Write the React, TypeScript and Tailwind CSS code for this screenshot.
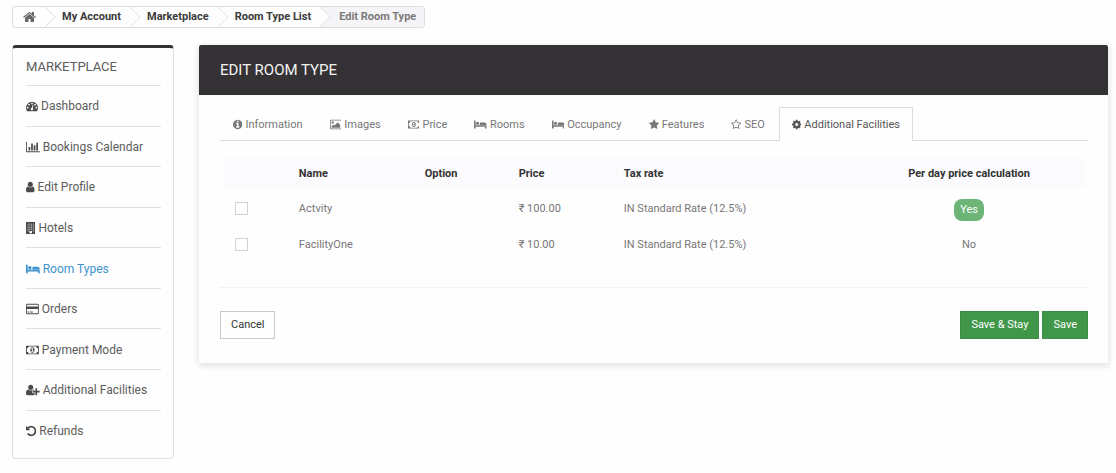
import React from "react";

type Shape = { box: string; d: string };

const shapes: Record<string, Shape> = {
  home: {
    box: "64 0 1664 1792",
    d: "M1472 992v480q0 26-19 45t-45 19h-384v-384h-256v384h-384q-26 0-45-19t-19-45v-480q0-1 .5-3t.5-3l575-474 575 474q1 2 1 6zm223-69l-62 74q-8 9-21 11h-3q-13 0-21-7l-692-577-692 577q-12 8-24 7-13-2-21-11l-62-74q-8-10-7-23.5t11-21.5l719-599q32-26 76-26t76 26l244 204v-195q0-14 9-23t23-9h192q14 0 23 9t9 23v408l219 182q10 8 11 21.5t-7 23.5z",
  },
  dashboard: {
    box: "0 0 1792 1792",
    d: "M896 256a896 896 0 0 1 896 896q0 262-141 483-19 29-54 29H195q-35 0-54-29Q0 1415 0 1152A896 896 0 0 1 896 256zM256 1024a128 128 0 1 0 0 256 128 128 0 1 0 0-256zM448 576a128 128 0 1 0 0 256 128 128 0 1 0 0-256zM896 384a128 128 0 1 0 0 256 128 128 0 1 0 0-256zM1344 576a128 128 0 1 0 0 256 128 128 0 1 0 0-256zM1536 1024a128 128 0 1 0 0 256 128 128 0 1 0 0-256zM1004 1185l101-382q6-26-7.500-48.500t-38.500-29.500-48 6.500-30 39.500l-101 382q-60 5-107 43.500t-63 98.500q-20 77 20 146t117 89 146-20 89-117q16-60-6-117t-72-91z",
  },
  chart: {
    box: "0 0 2048 1792",
    d: "M640 896v512h-256v-512h256zm384-512v1024h-256v-1024h256zm1024 1152v128h-2048v-1536h128v1408h1920zm-640-896v768h-256v-768h256zm384-384v1152h-256v-1152h256z",
  },
  user: {
    box: "256 0 1280 1792",
    d: "M1536 1399q0 109-62.5 187t-150.5 78h-854q-88 0-150.5-78t-62.5-187q0-85 8.5-160.5t31.5-152 58.5-131 94-89 134.5-34.5q131 128 313 128t313-128q76 0 134.5 34.5t94 89 58.5 131 31.5 152 8.5 160.5zm-256-887q0 159-112.5 271.5t-271.5 112.5-271.5-112.5-112.5-271.5 112.5-271.5 271.5-112.5 271.5 112.5 112.5 271.5z",
  },
  building: {
    box: "0 0 1408 1792",
    d: "M64 0h1280q64 0 64 64v1664q0 64-64 64h-1280q-64 0-64-64v-1664q0-64 64-64zM256 256v128h128v-128zM512 256v128h128v-128zM768 256v128h128v-128zM1024 256v128h128v-128zM256 512v128h128v-128zM512 512v128h128v-128zM768 512v128h128v-128zM1024 512v128h128v-128zM256 768v128h128v-128zM512 768v128h128v-128zM768 768v128h128v-128zM1024 768v128h128v-128zM256 1024v128h128v-128zM512 1024v128h128v-128zM768 1024v128h128v-128zM1024 1024v128h128v-128zM256 1280v128h128v-128zM1024 1280v128h128v-128zM512 1344v320h384v-320z",
  },
  bed: {
    box: "0 0 2048 1792",
    d: "M256 1024h1728q26 0 45 19t19 45v448h-256v-256h-1536v256h-256v-1216q0-26 19-45t45-19h128q26 0 45 19t19 45v704zm576-320q0-106-75-181t-181-75-181 75-75 181 75 181 181 75 181-75 75-181zm1216 256v-64q0-132-94-226t-226-94h-704q-26 0-45 19t-19 45v320h1088z",
  },
  card: {
    box: "0 0 1920 1792",
    d: "M1760 128q66 0 113 47t47 113v1216q0 66-47 113t-113 47h-1600q-66 0-113-47t-47-113v-1216q0-66 47-113t113-47h1600zm-1600 128q-13 0-22.5 9.500t-9.500 22.500v224h1664v-224q0-13-9.500-22.500t-22.500-9.500h-1600zm1600 1280q13 0 22.500-9.500t9.500-22.500v-608h-1664v608q0 13 9.500 22.500t22.500 9.500h1600zm-1504-128v-128h256v128h-256zm384 0v-128h384v128h-384z",
  },
  money: {
    box: "0 0 1920 1792",
    d: "M768 1152h384v-96h-128v-448h-114l-148 137 77 80q42-37 55-57h2v288h-128v96zm512-256q0 70-21 142t-59.5 134-101.5 101-138 39-138-39-101.5-101-59.5-134-21-142 21-142 59.5-134 101.5-101 138-39 138 39 101.5 101 59.5 134 21 142zm512 256v-512q-106 0-181-75t-75-181h-1152q0 106-75 181t-181 75v512q106 0 181 75t75 181h1152q0-106 75-181t181-75zm128-832v1152q0 26-19 45t-45 19h-1792q-26 0-45-19t-19-45v-1152q0-26 19-45t45-19h1792q26 0 45 19t19 45z",
  },
  userPlus: {
    box: "0 0 2048 1792",
    d: "M704 896q-159 0-271.5-112.5t-112.5-271.5 112.5-271.5 271.5-112.5 271.5 112.5 112.5 271.5-112.5 271.5-271.5 112.5zm960 128h352q13 0 22.5 9.5t9.5 22.5v192q0 13-9.5 22.5t-22.5 9.5h-352v352q0 13-9.5 22.5t-22.5 9.5h-192q-13 0-22.5-9.5t-9.5-22.5v-352h-352q-13 0-22.5-9.5t-9.5-22.5v-192q0-13 9.5-22.5t22.5-9.5h352v-352q0-13 9.5-22.5t22.5-9.5h192q13 0 22.5 9.5t9.5 22.5v352zm-736 224q0 52 38 90t90 38h256v238q-68 50-171 50h-874q-121 0-194-69t-73-190q0-53 3.5-103.5t14-109 26.5-108.5 43-97.5 62-81 85.5-53.5 111.5-20q19 0 39 17 79 61 154.5 91.5t164.5 30.5 164.5-30.5 154.5-91.5q20-17 39-17 132 0 217 96h-223q-52 0-90 38t-38 90v192z",
  },
  undo: {
    box: "128 0 1536 1792",
    d: "M1664 896q0 156-61 298t-164 245-245 164-298 61q-172 0-327-72.5t-264-204.5q-7-10-6.5-22.5t8.5-20.5l137-138q10-9 25-9 16 2 23 12 73 95 179 147t225 52q104 0 198.5-40.5t163.5-109.5 109.5-163.5 40.5-198.5-40.5-198.5-109.5-163.5-163.5-109.5-198.5-40.5q-98 0-188 35.5t-160 101.5l137 138q31 30 14 69-17 40-59 40h-448q-26 0-45-19t-19-45v-448q0-42 40-59 39-17 69 14l130 129q107-101 244.5-156.5t284.5-55.5q156 0 298 61t245 164 164 245 61 298z",
  },
  info: {
    box: "128 0 1536 1792",
    d: "M1152 1376v-160q0-14-9-23t-23-9h-96v-512q0-14-9-23t-23-9h-320q-14 0-23 9t-9 23v160q0 14 9 23t23 9h96v320h-96q-14 0-23 9t-9 23v160q0 14 9 23t23 9h448q14 0 23-9t9-23zm-128-896v-160q0-14-9-23t-23-9h-192q-14 0-23 9t-9 23v160q0 14 9 23t23 9h192q14 0 23-9t9-23zm640 416q0 209-103 385.5t-279.5 279.5-385.5 103-385.5-103-279.5-279.5-103-385.5 103-385.5 279.5-279.5 385.5-103 385.5 103 279.5 279.5 103 385.5z",
  },
  picture: {
    box: "0 0 1920 1792",
    d: "M640 576q0 80-56 136t-136 56-136-56-56-136 56-136 136-56 136 56 56 136zm1024 384v448h-1408v-192l320-320 160 160 512-512zm96-704h-1600q-13 0-22.5 9.5t-9.5 22.5v1216q0 13 9.5 22.5t22.5 9.5h1600q13 0 22.5-9.5t9.5-22.5v-1216q0-13-9.5-22.5t-22.5-9.5zm160 32v1216q0 66-47 113t-113 47h-1600q-66 0-113-47t-47-113v-1216q0-66 47-113t113-47h1600q66 0 113 47t47 113z",
  },
  star: {
    box: "64 0 1664 1792",
    d: "M1728 647q0 22-26 48l-363 354 86 500q1 7 1 20 0 21-10.5 35.5t-30.5 14.5q-19 0-40-12l-449-236-449 236q-22 12-40 12-21 0-31.5-14.5t-10.5-35.5q0-6 2-20l86-500-364-354q-25-27-25-48 0-37 56-46l502-73 225-455q19-41 49-41t49 41l225 455 502 73q56 9 56 46z",
  },
  starOutline: {
    box: "64 0 1664 1792",
    d: "M1201 1004l306-297-422-62-189-382-189 382-422 62 306 297-73 421 378-199 377 199zm527-357q0 22-26 48l-363 354 86 500q1 7 1 20 0 50-41 50-19 0-40-12l-449-236-449 236q-22 12-40 12-21 0-31.5-14.5t-10.5-35.5q0-6 2-20l86-500-364-354q-25-27-25-48 0-37 56-46l502-73 225-455q19-41 49-41t49 41l225 455 502 73q56 9 56 46z",
  },
  cog: {
    box: "128 0 1536 1792",
    d: "M1152 896q0-106-75-181t-181-75-181 75-75 181 75 181 181 75 181-75 75-181zm512-109v222q0 12-8 23t-20 13l-185 28q-19 54-39 91 35 50 107 138 10 12 10 25t-9 23q-27 37-99 108t-94 71q-12 0-26-9l-138-108q-44 23-91 38-16 136-29 186-7 28-36 28h-222q-14 0-24.5-8.5t-11.5-21.5l-28-184q-49-16-90-37l-141 107q-10 9-25 9-14 0-25-11-126-114-165-168-7-10-7-23 0-12 8-23 15-21 51-66.5t54-70.5q-27-50-41-99l-183-27q-13-2-21-12.5t-8-23.5v-222q0-12 8-23t19-13l186-28q14-46 39-92-40-57-107-138-10-12-10-24 0-10 9-23 26-36 98.5-107.5t94.5-71.5q13 0 26 10l138 107q44-23 91-38 16-136 29-186 7-28 36-28h222q14 0 24.5 8.5t11.5 21.5l28 184q49 16 90 37l142-107q9-9 24-9 13 0 25 10 129 119 165 170 7 8 7 22 0 12-8 23-15 21-51 66.5t-54 70.5q26 50 41 98l183 28q13 2 21 12.5t8 23.5z",
  },
};

function Icon({ name, className }: { name: string; className: string }) {
  const s = shapes[name];
  return (
    <svg viewBox={s.box} className={className} fill="currentColor" fillRule="evenodd" aria-hidden>
      <path d={s.d} />
    </svg>
  );
}

const crumbs = ["My Account", "Marketplace", "Room Type List"];

const menu = [
  { icon: "dashboard", label: "Dashboard" },
  { icon: "chart", label: "Bookings Calendar" },
  { icon: "user", label: "Edit Profile" },
  { icon: "building", label: "Hotels" },
  { icon: "bed", label: "Room Types", active: true },
  { icon: "card", label: "Orders" },
  { icon: "money", label: "Payment Mode" },
  { icon: "userPlus", label: "Additional Facilities" },
  { icon: "undo", label: "Refunds" },
];

const tabs = [
  { icon: "info", label: "Information" },
  { icon: "picture", label: "Images" },
  { icon: "money", label: "Price" },
  { icon: "bed", label: "Rooms" },
  { icon: "bed", label: "Occupancy" },
  { icon: "star", label: "Features" },
  { icon: "starOutline", label: "SEO" },
  { icon: "cog", label: "Additional Facilities", active: true },
];

const facilities = [
  { name: "Actvity", price: "₹ 100.00", tax: "IN Standard Rate (12.5%)", perDay: true },
  { name: "FacilityOne", price: "₹ 10.00", tax: "IN Standard Rate (12.5%)", perDay: false },
];

function Chevron() {
  return (
    <svg viewBox="0 0 11 20" className="h-5 w-[11px] shrink-0" aria-hidden>
      <path d="M0 0L10 10L0 20" fill="#fefefe" stroke="#dedce0" strokeWidth="1" />
    </svg>
  );
}

function Breadcrumbs() {
  return (
    <nav aria-label="Breadcrumb" className="flex">
      <ol className="flex h-[22px] items-stretch overflow-hidden rounded-[3px] border border-[#dedce0] text-[11px] font-bold leading-5 text-[#3a3a3a]">
        <li className="flex">
          <a href="#home" aria-label="Home" className="flex items-center pl-[10px] pr-[9px] text-[#666]">
            <Icon name="home" className="h-[14px] w-[13px]" />
          </a>
          <Chevron />
        </li>
        {crumbs.map((c, i) => (
          <li key={c} className={i === crumbs.length - 1 ? "flex bg-[#f5f4f6]" : "flex"}>
            <a href="#crumb" className="bg-[#fefefe] pl-[6px] pr-[9px]">{c}</a>
            <Chevron />
          </li>
        ))}
        <li aria-current="page" className="bg-[#f5f4f6] px-2 text-[#7a7a7a]">Edit Room Type</li>
      </ol>
    </nav>
  );
}

function Sidebar() {
  return (
    <aside className="flex min-h-[414px] w-[162px] shrink-0 flex-col rounded-[4px] border border-t-[3px] border-[#e2e0e4] border-t-[#353235] pb-2 pl-[13px] pr-3">
      <h2 className="h-[37px] text-[13px] leading-[37px] text-[#5c5c5c]">MARKETPLACE</h2>
      <ul className="flex flex-1 flex-col">
        {menu.map((m) => (
          <li key={m.label} className="flex min-h-10 flex-1 items-center border-t border-[#e0dee2]">
            <a
              href="#menu"
              className={
                m.active
                  ? "flex items-center gap-[3px] whitespace-nowrap pt-px text-[12px] text-[#4093cf]"
                  : "flex items-center gap-[3px] whitespace-nowrap pt-px text-[12px] text-[#5c5c5c]"
              }
            >
              <Icon name={m.icon} className={m.active ? "h-3 w-auto" : "h-3 w-auto text-[#4a4a4a]"} />
              {m.label}
            </a>
          </li>
        ))}
      </ul>
    </aside>
  );
}

function Tabs() {
  return (
    <div role="tablist" className="flex border-b border-[#dddbe0]">
      {tabs.map((t) => (
        <button
          key={t.label}
          type="button"
          role="tab"
          aria-selected={!!t.active}
          className={
            t.active
              ? "-mb-px flex h-[34px] items-center gap-[3px] whitespace-nowrap border border-b-0 border-[#dddbe0] bg-[#fefefe] px-3 pt-px text-[11px] text-[#555]"
              : "mr-px flex h-[33px] items-center gap-[3px] whitespace-nowrap px-[13px] pt-[3px] text-[11px] text-[#777]"
          }
        >
          <Icon name={t.icon} className="mb-px h-[11px] w-auto" />
          {t.label}
        </button>
      ))}
    </div>
  );
}

function FacilitiesTable() {
  return (
    <table className="w-full table-fixed text-left text-[11px] text-[#777]">
      <colgroup>
        <col className="w-[8.8%]" />
        <col className="w-[14.6%]" />
        <col className="w-[10.9%]" />
        <col className="w-[12.2%]" />
        <col className="w-[26.6%]" />
        <col className="w-[26.9%]" />
      </colgroup>
      <thead>
        <tr className="h-[30px] bg-[#fbfafc] text-[#333] [&>th]:pt-[2px]">
          <th aria-label="Select" />
          <th>Name</th>
          <th>Option</th>
          <th>Price</th>
          <th>Tax rate</th>
          <th className="text-center">Per day price calculation</th>
        </tr>
      </thead>
      <tbody>
        {facilities.map((f, i) => (
          <tr key={f.name} className={i === 0 ? "h-[41px] [&>td]:pt-[2px]" : "h-[31px] [&>td]:pt-[2px]"}>
            <td className="pb-[3px] pl-3">
              <input
                type="checkbox"
                aria-label={f.name}
                className="block size-[13px] appearance-none border border-[#d3d0d6] bg-white"
              />
            </td>
            <td>{f.name}</td>
            <td />
            <td>{f.price}</td>
            <td>{f.tax}</td>
            <td className="text-center">
              {f.perDay ? (
                <span className="inline-block rounded-[8px] bg-[#6cb577] px-[6px] leading-[22px] text-white">Yes</span>
              ) : (
                "No"
              )}
            </td>
          </tr>
        ))}
      </tbody>
    </table>
  );
}

export default function App() {
  return (
    <div className="min-h-screen bg-[#fefefe] pb-[14px] pl-[12px] pr-2 pt-[6px] font-[Roboto,sans-serif]">
      <Breadcrumbs />
      <div className="mt-[17px] flex items-start gap-[25px]">
        <Sidebar />
        <main className="min-w-0 flex-1 bg-[#fefefe] shadow-[0_2px_6px_1px_rgba(0,0,0,0.11)]">
          <h1 className="rounded-t-[2px] bg-[#353235] px-[21px] text-[15px] leading-[50px] text-[#f3f3f3]">EDIT ROOM TYPE</h1>
          <form className="px-5 pb-6 pl-[21px] pt-3" onSubmit={(e) => e.preventDefault()}>
            <Tabs />
            <div className="px-[3px] pt-[17px]">
              <FacilitiesTable />
            </div>
            <div className="mt-[27px] flex border-t border-[#f3f2f4] pt-[23px]">
              <button type="button" className="h-7 border border-[#cbc8cd] px-[10px] text-[11px] text-[#333]">Cancel</button>
              <button type="button" className="ml-auto mr-[3px] h-7 border border-[#3f8a4b] bg-[#409749] px-[10px] text-[11px] text-white">
                Save &amp; Stay
              </button>
              <button type="submit" className="h-7 border border-[#3f8a4b] bg-[#409749] px-[10px] text-[11px] text-white">Save</button>
            </div>
          </form>
        </main>
      </div>
    </div>
  );
}
